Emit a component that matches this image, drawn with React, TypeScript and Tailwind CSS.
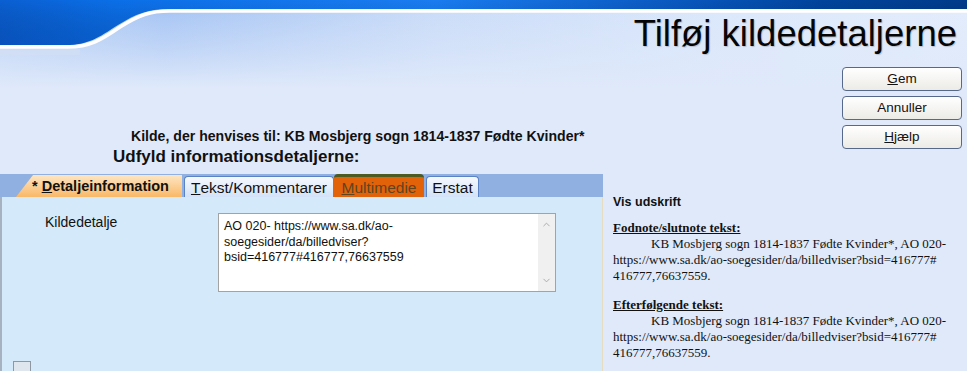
import React from "react";
import { ChevronUp, ChevronDown } from "lucide-react";

function HeaderArt() {
  return (
    <svg
      className="absolute left-0 top-0"
      width="967"
      height="90"
      viewBox="0 0 967 90"
    >
      <defs>
        <linearGradient id="band" x1="0" y1="0" x2="967" y2="0" gradientUnits="userSpaceOnUse">
          <stop offset="0" stopColor="#0a5fd2" />
          <stop offset="0.12" stopColor="#0b6fe8" />
          <stop offset="0.45" stopColor="#1a7cf0" />
          <stop offset="0.7" stopColor="#0a58c0" />
          <stop offset="0.85" stopColor="#00449c" />
          <stop offset="1" stopColor="#003b8a" />
        </linearGradient>
        <linearGradient id="bandv" x1="0" y1="0" x2="0" y2="46" gradientUnits="userSpaceOnUse">
          <stop offset="0" stopColor="#000000" stopOpacity="0" />
          <stop offset="1" stopColor="#002a80" stopOpacity="0.25" />
        </linearGradient>
        <linearGradient id="light" x1="0" y1="0" x2="967" y2="0" gradientUnits="userSpaceOnUse">
          <stop offset="0" stopColor="#bcd3f6" />
          <stop offset="0.17" stopColor="#a7c5f4" />
          <stop offset="0.45" stopColor="#cadcf8" />
          <stop offset="0.75" stopColor="#dce8fb" />
          <stop offset="1" stopColor="#e2ecfb" />
        </linearGradient>
        <linearGradient id="fade" x1="0" y1="10" x2="0" y2="88" gradientUnits="userSpaceOnUse">
          <stop offset="0" stopColor="#dfe9fa" stopOpacity="0" />
          <stop offset="0.55" stopColor="#dfe9fa" stopOpacity="0.5" />
          <stop offset="1" stopColor="#dfe9fa" stopOpacity="1" />
        </linearGradient>
      </defs>
      <rect x="0" y="0" width="967" height="90" fill="url(#light)" />
      <rect x="0" y="0" width="967" height="90" fill="url(#fade)" />
      <path
        d="M0 0 H967 V9 H168 C148 9 136 14 118 25 C98 38 88 45 66 45 H0 Z"
        fill="url(#band)"
      />
      <path
        d="M0 0 H967 V9 H168 C148 9 136 14 118 25 C98 38 88 45 66 45 H0 Z"
        fill="url(#bandv)"
      />
      <path
        d="M0 47 H68 C90 47 101 40 120 27 C139 15 150 11 170 11 H967"
        fill="none"
        stroke="#ffffff"
        strokeWidth="3.5"
      />
      <rect x="0" y="49" width="80" height="6" fill="#d3e0f4" opacity="0.6" />
    </svg>
  );
}

function Btn({ children }: { children: React.ReactNode }) {
  return (
    <div className="flex h-[24px] w-[120px] items-center justify-center rounded-[4px] border border-[#56698a] bg-gradient-to-b from-[#ffffff] to-[#ecebe6] text-[13.5px] text-[#111]">
      {children}
    </div>
  );
}

export default function App() {
  return (
    <div className="relative h-[371px] w-[967px] overflow-hidden bg-[#dfe9fa] font-['Liberation_Sans',Arial,sans-serif] text-black">
      {/* header */}
      <div className="relative h-[62px]">
        <HeaderArt />
        <div className="relative flex justify-end pr-[10px] pt-[13px] text-[36.5px] leading-[42px] text-[#050505] [text-shadow:1px_1px_1px_rgba(0,0,0,0.18)]">
          Tilføj kildedetaljerne
        </div>
      </div>

      {/* top section: source line + buttons */}
      <div className="relative flex">
        <div className="flex w-[602px] flex-col pt-[66px]">
          <div className="pl-[131px] text-[14.1px] font-bold leading-[17px] text-[#111]">
            Kilde, der henvises til: KB Mosbjerg sogn 1814-1837 Fødte Kvinder*
          </div>
          <div className="mb-[7px] mt-[2px] pl-[113px] text-[17px] font-bold leading-[20px] text-[#111]">
            Udfyld informationsdetaljerne:
          </div>
        </div>
        <div className="ml-auto mr-[5px] mt-[5px] flex flex-col gap-[5px]">
          <Btn>
            <span>
              <span className="underline">G</span>em
            </span>
          </Btn>
          <Btn>Annuller</Btn>
          <Btn>
            <span>
              <span className="underline">H</span>jælp
            </span>
          </Btn>
        </div>
      </div>

      {/* bottom section */}
      <div className="flex h-[195px]">
        {/* tab area */}
        <div className="flex w-[603px] flex-col">
          <div className="flex h-[25px] items-end bg-[#8fb0e0] pl-[16px]">
            <div className="flex h-[22px] w-[166px] items-center bg-gradient-to-b from-[#fde6c2] to-[#f9b866] pl-[16px] pt-[2px] text-[14.5px] font-bold text-[#111] [clip-path:polygon(0_100%,17px_0,100%_0,100%_100%)]">
              *&nbsp;<span className="underline">D</span>etaljeinformation
            </div>
            <div className="ml-[2px] flex h-[21px] w-[150px] items-center justify-center rounded-t-[4px] border border-b-0 border-[#5b82c4] bg-gradient-to-b from-[#f6f9fe] to-[#d3e2f8] pt-[2px] text-[15.5px] text-[#111]">
              <span className="underline">T</span>ekst/Kommentarer
            </div>
            <div className="flex h-[23px] w-[90px] items-center justify-center rounded-t-[4px] border-t-[3px] border-[#4d5a22] bg-[#e2620a] pt-[1px] text-[15.5px] text-[#5e4420]">
              <span className="underline">M</span>ultimedie
            </div>
            <div className="ml-[2px] flex h-[21px] w-[53px] items-center justify-center rounded-t-[4px] border border-b-0 border-[#5b82c4] bg-gradient-to-b from-[#f6f9fe] to-[#d3e2f8] pt-[2px] text-[15.5px] text-[#111]">
              Erstat
            </div>
          </div>
          <div className="flex flex-1 flex-col border-l-[2px] border-r border-l-[#a7b2c0] border-r-[#e6dcc2] bg-[#d4e9fa]">
            <div className="flex pt-[16px]">
              <div className="w-[216px] pl-[43px] pt-[1px] text-[14px] leading-[17px] text-[#111]">
                Kildedetalje
              </div>
              <div className="flex h-[79px] w-[338px] border border-[#a3a3a3] bg-white">
                <div className="flex-1 pl-[5px] pt-[5px] text-[12.5px] leading-[15.5px] text-[#111]">
                  AO 020- https://www.sa.dk/ao-
                  <br />
                  soegesider/da/billedviser?
                  <br />
                  bsid=416777#416777,76637559
                </div>
                <div className="flex w-[17px] flex-col items-center justify-between bg-[#f0f0f0] py-[5px] text-[#a6a6a6]">
                  <ChevronUp size={11} strokeWidth={2} />
                  <ChevronDown size={11} strokeWidth={2} />
                </div>
              </div>
            </div>
            <div className="ml-[11px] mt-[69px] h-[14px] w-[18px] border border-[#8e98a3] bg-[#dfe6ee]" />
          </div>
        </div>

        {/* print preview */}
        <div className="flex-1 pl-[10px] pt-[20px]">
          <div className="text-[12.5px] font-bold leading-[16px] text-[#111]">Vis udskrift</div>
          <div className="mt-[10px] font-['Liberation_Serif','Times_New_Roman',serif] text-[13px] leading-[16px] text-[#111]">
            <div className="font-bold underline">Fodnote/slutnote tekst:</div>
            <div>
              <span className="pl-[38px]">KB Mosbjerg sogn 1814-1837 Fødte Kvinder*, AO 020-</span>
              <br />
              https://www.sa.dk/ao-soegesider/da/billedviser?bsid=416777#
              <br />
              416777,76637559.
            </div>
            <div className="mt-[13px] font-bold underline">Efterfølgende tekst:</div>
            <div>
              <span className="pl-[38px]">KB Mosbjerg sogn 1814-1837 Fødte Kvinder*, AO 020-</span>
              <br />
              https://www.sa.dk/ao-soegesider/da/billedviser?bsid=416777#
              <br />
              416777,76637559.
            </div>
          </div>
        </div>
      </div>
    </div>
  );
}
